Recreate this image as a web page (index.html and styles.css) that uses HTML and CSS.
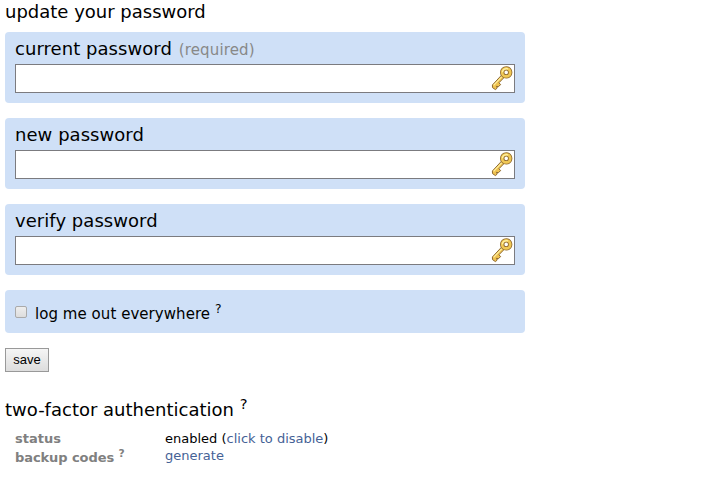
FILE: index.html
```
<!DOCTYPE html>
<html lang="en">
<head>
    <meta charset="UTF-8">
    <meta name="viewport" content="width=device-width, initial-scale=1.0">
    <title>update your password</title>
    <link rel="stylesheet" href="styles.css">
</head>
<body>
    <svg class="sprite" width="0" height="0">
        <symbol id="key" viewBox="0 0 24 26">
            <path d="M11.5 10.2 L2.4 20 L2.5 22.6 L5.4 24.6 L7.3 23 L6.4 21.3 L8.3 21.7 L10.7 19.6 L8.9 17.8 L14 12.6 Z" fill="#efc250" stroke="#8f6a30" stroke-width="1" stroke-linejoin="round"/>
            <path d="M3.6 20.4 L12.4 11.2" stroke="#fff0a0" stroke-width="1.2"/>
            <circle cx="16.2" cy="7.4" r="4" fill="none" stroke="#8f6a30" stroke-width="4.4"/>
            <circle cx="16.2" cy="7.4" r="4" fill="none" stroke="#f0c855" stroke-width="2.7"/>
            <path d="M12.4 7.2 A4 4 0 0 1 18 3.9" fill="none" stroke="#fff2a5" stroke-width="1.2"/>
        </symbol>
    </svg>

    <form class="pass-form" onsubmit="return false">
        <h1>update your password</h1>

        <div class="field">
            <label for="curpass" class="current">current password <span class="required">(required)</span></label>
            <div class="input-wrapper">
                <input type="password" id="curpass">
                <svg class="key"><use href="#key"/></svg>
            </div>
        </div>

        <div class="field">
            <label for="newpass" class="new">new password</label>
            <div class="input-wrapper">
                <input type="password" id="newpass">
                <svg class="key"><use href="#key"/></svg>
            </div>
        </div>

        <div class="field">
            <label for="verpass" class="verify">verify password</label>
            <div class="input-wrapper">
                <input type="password" id="verpass">
                <svg class="key"><use href="#key"/></svg>
            </div>
        </div>

        <div class="field logout">
            <input type="checkbox" id="invalidate">
            <label for="invalidate">log me out everywhere <sup>?</sup></label>
        </div>

        <button type="submit">save</button>
    </form>

    <h2>two-factor authentication <sup>?</sup></h2>
    <dl class="two-factor">
        <dt>status</dt>
        <dd>enabled (<a href="#">click to disable</a>)</dd>
        <dt class="backup">backup codes <sup>?</sup></dt>
        <dd><a href="#">generate</a></dd>
    </dl>
</body>
</html>
```

FILE: styles.css
```
body {
    font-family: Verdana, "DejaVu Sans", sans-serif;
    background-color: #fff;
    color: #000;
    margin: 0;
    padding: 0 5px;
}

.sprite {
    display: block;
}

h1,
h2 {
    font-size: 18px;
    font-weight: normal;
    line-height: 24px;
    margin: 0;
}

h1 {
    margin-bottom: 8px;
}

sup {
    font-size: 0.82em;
    line-height: 0;
    vertical-align: 6px;
}

.field {
    box-sizing: border-box;
    width: 520px;
    height: 71px;
    padding: 6px 10px 10px;
    margin-bottom: 15px;
    border-radius: 4px;
    background-color: #cfe0f7;
}

.field label {
    display: block;
    height: 22px;
    font-size: 18px;
    line-height: 22px;
    margin-bottom: 4px;
    letter-spacing: 0.05px;
}

.required {
    font-size: 15px;
    letter-spacing: 0.15px;
    margin-left: 1px;
    color: #888;
}

.input-wrapper {
    display: flex;
    align-items: flex-start;
    justify-content: flex-end;
    box-sizing: border-box;
    height: 29px;
    border: 1px solid #7b7b7f;
    background-color: #fff;
}

.input-wrapper input {
    flex: 1;
    height: 27px;
    box-sizing: border-box;
    border: none;
    outline: none;
    background: none;
}

.key {
    width: 24px;
    height: 26px;
}

.field.logout {
    display: flex;
    align-items: center;
    height: 43px;
    padding: 4px 10px 0;
}

.logout input {
    appearance: none;
    width: 12px;
    height: 12px;
    margin: 0 8px 3px 0;
    border: 1px solid #aaa;
    border-radius: 2px;
    background: linear-gradient(#eee, #ddd);
}

.field.logout label {
    font-size: 15px;
    margin: 0;
}

button {
    display: block;
    width: 44px;
    height: 24px;
    padding: 0 0 2px;
    border: 1px solid #999;
    background: linear-gradient(#f5f5f5, #ddd);
    font: 13px "Liberation Sans", Arial, sans-serif;
    color: #000;
}

h2 {
    margin-top: 26px;
}

h2 sup {
    vertical-align: 7px;
}

.two-factor {
    display: grid;
    grid-template-columns: 150px 1fr;
    margin: 8px 0 0 10px;
    font-size: 13px;
    line-height: 17px;
}

dt {
    font-weight: bold;
    color: #808080;
}

.backup {
    padding-top: 2px;
    letter-spacing: -0.08px;
}

.backup sup {
    vertical-align: 5px;
}

dd {
    margin: 0;
}

a {
    color: #456296;
    text-decoration: none;
}
```
